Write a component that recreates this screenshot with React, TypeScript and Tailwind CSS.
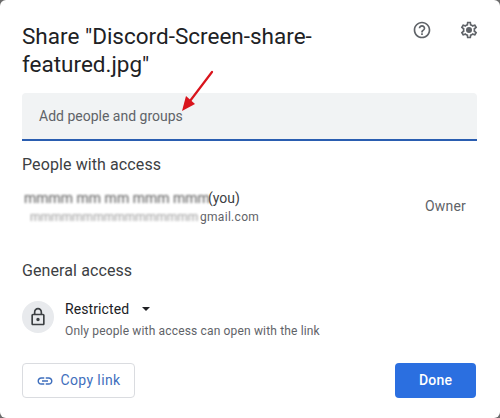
function HelpIcon() {
  return (
    <svg width="20" height="20" viewBox="0 0 24 24" fill="#5f6368">
      <path d="M11 18h2v-2h-2v2zm1-16C6.48 2 2 6.48 2 12s4.48 10 10 10 10-4.48 10-10S17.52 2 12 2zm0 18c-4.41 0-8-3.59-8-8s3.59-8 8-8 8 3.59 8 8-3.59 8-8 8zm0-14c-2.21 0-4 1.79-4 4h2c0-1.1.9-2 2-2s2 .9 2 2c0 2-3 1.75-3 5h2c0-2.25 3-2.5 3-5 0-2.21-1.79-4-4-4z" />
    </svg>
  );
}

function GearIcon() {
  return (
    <svg width="20" height="20" viewBox="0 0 24 24" fill="#5f6368">
      <path d="M19.43 12.98c.04-.32.07-.64.07-.98s-.03-.66-.07-.98l2.11-1.65c.19-.15.24-.42.12-.64l-2-3.46c-.12-.22-.39-.3-.61-.22l-2.49 1c-.52-.4-1.08-.73-1.69-.98l-.38-2.65C14.46 2.18 14.25 2 14 2h-4c-.25 0-.46.18-.49.42l-.38 2.65c-.61.25-1.17.59-1.69.98l-2.49-1c-.23-.09-.49 0-.61.22l-2 3.46c-.13.22-.07.49.12.64l2.11 1.65c-.04.32-.07.65-.07.98s.03.66.07.98l-2.11 1.65c-.19.15-.24.42-.12.64l2 3.46c.12.22.39.3.61.22l2.49-1c.52.4 1.08.73 1.69.98l.38 2.65c.03.24.24.42.49.42h4c.25 0 .46-.18.49-.42l.38-2.65c.61-.25 1.17-.59 1.69-.98l2.49 1c.23.09.49 0 .61-.22l2-3.46c.12-.22.07-.49-.12-.64l-2.11-1.65zM17.45 11.27c.04.31.05.52.05.73s-.02.43-.05.73l-.14 1.13.89.7 1.08.84-.7 1.21-1.27-.51-1.04-.42-.9.68c-.43.32-.84.56-1.25.73l-1.06.43-.16 1.13-.2 1.35h-1.4l-.19-1.35-.16-1.13-1.06-.43c-.43-.18-.83-.41-1.23-.71l-.91-.7-1.06.43-1.27.51-.7-1.21 1.08-.84.89-.7-.14-1.13c-.03-.31-.05-.54-.05-.74s.02-.43.05-.73l.14-1.13-.89-.7-1.08-.84.7-1.21 1.27.51 1.04.42.9-.68c.43-.32.84-.56 1.25-.73l1.06-.43.16-1.13.2-1.35h1.39l.19 1.35.16 1.13 1.06.43c.43.18.83.41 1.23.71l.91.7 1.06-.43 1.27-.51.7 1.21-1.07.85-.89.7.14 1.13z" />
      <circle cx="12" cy="12" r="3.6" />
    </svg>
  );
}

function LockIcon() {
  return (
    <svg width="20" height="20" viewBox="0 0 24 24" fill="#3c4043">
      <path d="M18 8h-1V6c0-2.76-2.24-5-5-5S7 3.24 7 6v2H6c-1.1 0-2 .9-2 2v10c0 1.1.9 2 2 2h12c1.1 0 2-.9 2-2V10c0-1.1-.9-2-2-2zM9 6c0-1.66 1.34-3 3-3s3 1.34 3 3v2H9V6zm9 14H6V10h12v10zm-6-3c1.1 0 2-.9 2-2s-.9-2-2-2-2 .9-2 2 .9 2 2 2z" />
    </svg>
  );
}

function LinkIcon() {
  return (
    <svg width="18" height="18" viewBox="0 0 24 24" fill="#3f6fbd">
      <path d="M3.9 12c0-1.71 1.39-3.1 3.1-3.1h4V7H7c-2.76 0-5 2.24-5 5s2.24 5 5 5h4v-1.9H7c-1.71 0-3.1-1.39-3.1-3.1zM8 13h8v-2H8v2zm9-6h-4v1.9h4c1.71 0 3.1 1.39 3.1 3.1s-1.39 3.1-3.1 3.1h-4V17h4c2.76 0 5-2.24 5-5s-2.24-5-5-5z" />
    </svg>
  );
}

function RedArrow() {
  return (
    <svg className="absolute left-[178px] top-[68px]" width="40" height="46" viewBox="0 0 40 46">
      <path d="M34 4 L12 33" stroke="#d9141c" strokeWidth="2.2" strokeLinecap="round" fill="none" />
      <path d="M4 43 L8 28 L17 36 Z" fill="#d9141c" />
    </svg>
  );
}

export default function App() {
  return (
    <div className="w-[500px] h-[418px] bg-[#6b6b6b] font-['Roboto',sans-serif]">
      <div className="relative w-full h-full bg-white rounded-[6px] pt-[22px] px-[22px] pb-[20px] flex flex-col">
        <div className="flex justify-between items-start h-[58px]">
          <h1 className="w-[310px] text-[22.5px] leading-[28px] text-[#202124] font-normal">
            Share "Discord-Screen-share-featured.jpg"
          </h1>
          <div className="flex gap-[27px] mt-[-2px] mr-[-1px]">
            <HelpIcon />
            <GearIcon />
          </div>
        </div>

        <div className="mt-[13px] h-[48px] w-[455px] bg-[#f1f3f4] rounded-t-[4px] border-b-2 border-[#2a5db0] flex items-center pl-[17px] text-[14px] text-[#5f6368]">
          Add people and groups
        </div>
        <RedArrow />

        <div className="mt-[13px] text-[16px] leading-[22px] text-[#3c4043] tracking-[0.1px]">People with access</div>

        <div className="mt-[12px] flex items-center justify-between h-[38px]">
          <div>
            <div className="flex items-center h-[20px] text-[14px] text-[#3c4043] pl-[2px]">
              <span className="w-[184px] blur-[1px] text-[#555] whitespace-nowrap">mmmm mm mm mmm mmm</span>
              <span>(you)</span>
            </div>
            <div className="flex items-center h-[18px] text-[12px] text-[#5f6368] pl-[8px]">
              <span className="w-[170px] blur-[1px] text-[#999] whitespace-nowrap">mmmmmmmmmmmmmmmm</span>
              <span className="tracking-[0.3px]">gmail.com</span>
            </div>
          </div>
          <div className="mt-[-1px] text-[14px] text-[#5f6368] pr-[12px] tracking-[0.2px]">Owner</div>
        </div>

        <div className="mt-[34px] text-[16px] leading-[22px] text-[#3c4043] tracking-[0.1px]">General access</div>

        <div className="mt-[17px] flex items-start gap-[11px]">
          <div className="mt-[2px] w-[32px] h-[32px] rounded-full bg-[#e8eaed] flex items-center justify-center">
            <LockIcon />
          </div>
          <div>
            <div className="flex items-center h-[20px] text-[14px] text-[#202124] tracking-[0.1px]">
              Restricted
              <span className="ml-[13px] w-0 h-0 border-x-[4px] border-x-transparent border-t-[4px] border-t-[#202124]" />
            </div>
            <div className="mt-[2px] text-[12px] leading-[20px] text-[#5f6368] tracking-[0.16px]">
              Only people with access can open with the link
            </div>
          </div>
        </div>

        <div className="mt-auto flex justify-between items-center w-[454px]">
          <button className="w-[113px] h-[35px] bg-white border border-[#dadce0] rounded-[4px] flex items-center justify-center gap-[6px] text-[14px] text-[#3f6fbd] tracking-[0.4px]">
            <LinkIcon />
            Copy link
          </button>
          <button className="w-[81px] h-[35px] bg-[#2b6fe0] rounded-[4px] text-[14px] font-medium text-white tracking-[0.2px]">
            Done
          </button>
        </div>
      </div>
    </div>
  );
}
